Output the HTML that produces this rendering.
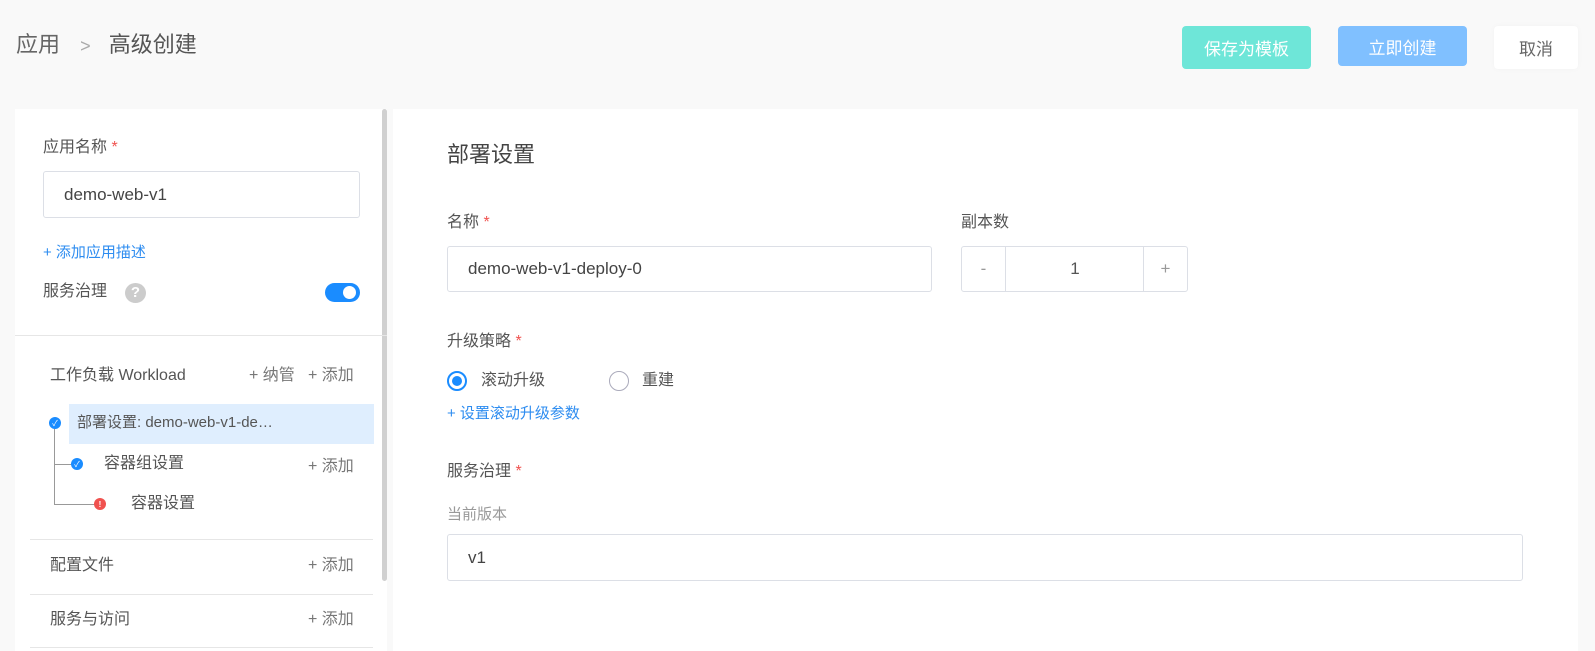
<!DOCTYPE html>
<html><head><meta charset="utf-8"><style>
*{margin:0;padding:0;box-sizing:border-box}
body{width:1595px;height:651px;background:#f9f9f9;font-family:"Liberation Sans","Noto Sans CJK SC",sans-serif;position:relative;overflow:hidden;color:#555}
.a{position:absolute;white-space:nowrap;line-height:1}
.btn{position:absolute;border-radius:4px;color:#fff;font-size:17px;display:flex;align-items:center;justify-content:center}
.inp{position:absolute;border:1px solid #dcdfe6;border-radius:3px;background:#fff;font-size:17px;color:#444;display:flex;align-items:center;padding-left:20px}
.star{color:#f0524f}
.blue{color:#2d8cf0}
.hr{position:absolute;height:1px;background:#e6e6e6}
.dot{position:absolute;width:12px;height:12px;border-radius:50%;background:#1a8cff;color:#fff;font-size:8px;display:flex;align-items:center;justify-content:center}
</style></head><body>
<div class="a" style="left:16px;top:34px;font-size:22px;color:#666">应用 <span style="color:#aaa;margin:0 12px 0 14px;font-size:18px">&gt;</span> <span style="color:#555">高级创建</span></div>
<div class="btn" style="left:1182px;top:26px;width:129px;height:43px;background:#6ee6d8">保存为模板</div>
<div class="btn" style="left:1338px;top:26px;width:129px;height:40px;background:#80c0ff">立即创建</div>
<div class="btn" style="left:1494px;top:26px;width:84px;height:43px;background:#fff;color:#666;box-shadow:0 0 6px rgba(0,0,0,.03)">取消</div>

<div style="position:absolute;left:15px;top:109px;width:372px;height:542px;background:#fff"></div>
<div style="position:absolute;left:382px;top:109px;width:5px;height:472px;background:#d0d0d0;border-radius:3px"></div>
<div style="position:absolute;left:393px;top:109px;width:1185px;height:542px;background:#fff"></div>

<div class="a" style="left:43px;top:140px;font-size:16px">应用名称 <span class="star">*</span></div>
<div class="inp" style="left:43px;top:171px;width:317px;height:47px">demo-web-v1</div>
<div class="a blue" style="left:43px;top:245px;font-size:15px">+ 添加应用描述</div>
<div class="a" style="left:43px;top:284px;font-size:16px">服务治理</div>
<div style="position:absolute;left:125px;top:283px;width:21px;height:20px;border-radius:50%;background:#ccc;color:#fff;font-size:15px;font-weight:bold;text-align:center;line-height:20px">?</div>
<div style="position:absolute;left:325px;top:283px;width:35px;height:19px;border-radius:10px;background:#1a8cff"><div style="position:absolute;right:4px;top:3px;width:13px;height:13px;border-radius:50%;background:#fff"></div></div>
<div class="hr" style="left:15px;top:335px;width:372px"></div>

<div class="a" style="left:50px;top:368px;font-size:16px">工作负载 Workload</div>
<div class="a" style="left:249px;top:368px;font-size:16px;color:#777">+ 纳管</div>
<div class="a" style="left:308px;top:368px;font-size:16px;color:#777">+ 添加</div>
<div style="position:absolute;left:69px;top:404px;width:305px;height:40px;background:#dfeefe"></div>
<div class="a" style="left:77px;top:415px;font-size:15px;color:#555">部署设置: demo-web-v1-de…</div>
<div style="position:absolute;left:54px;top:423px;width:1px;height:82px;background:#999"></div>
<div style="position:absolute;left:54px;top:464px;width:22px;height:1px;background:#999"></div>
<div style="position:absolute;left:54px;top:504px;width:44px;height:1px;background:#999"></div>
<div class="dot" style="left:49px;top:417px">✓</div>
<div class="dot" style="left:71px;top:458px">✓</div>
<div class="dot" style="left:94px;top:498px;background:#f0524f;font-weight:bold">!</div>
<div class="a" style="left:104px;top:456px;font-size:16px">容器组设置</div>
<div class="a" style="left:308px;top:459px;font-size:16px;color:#777">+ 添加</div>
<div class="a" style="left:131px;top:496px;font-size:16px">容器设置</div>
<div class="hr" style="left:30px;top:539px;width:343px"></div>
<div class="a" style="left:50px;top:558px;font-size:16px">配置文件</div>
<div class="a" style="left:308px;top:558px;font-size:16px;color:#777">+ 添加</div>
<div class="hr" style="left:30px;top:594px;width:343px"></div>
<div class="a" style="left:50px;top:612px;font-size:16px">服务与访问</div>
<div class="a" style="left:308px;top:612px;font-size:16px;color:#777">+ 添加</div>
<div class="hr" style="left:30px;top:647px;width:343px"></div>

<div class="a" style="left:447px;top:144px;font-size:22px;color:#444">部署设置</div>
<div class="a" style="left:447px;top:215px;font-size:16px">名称 <span class="star">*</span></div>
<div class="a" style="left:961px;top:215px;font-size:16px">副本数</div>
<div class="inp" style="left:447px;top:246px;width:485px;height:46px">demo-web-v1-deploy-0</div>
<div style="position:absolute;left:961px;top:246px;width:227px;height:46px;border:1px solid #dcdfe6;border-radius:3px;background:#fff;font-size:17px;color:#555">
<div style="position:absolute;left:0;top:0;width:44px;height:44px;line-height:44px;text-align:center;color:#999;border-right:1px solid #dcdfe6">-</div>
<div style="position:absolute;left:44px;top:0;width:138px;height:44px;line-height:44px;text-align:center">1</div>
<div style="position:absolute;right:0;top:0;width:44px;height:44px;line-height:44px;text-align:center;color:#999;border-left:1px solid #dcdfe6">+</div>
</div>
<div class="a" style="left:447px;top:334px;font-size:16px">升级策略 <span class="star">*</span></div>
<div style="position:absolute;left:447px;top:371px;width:20px;height:20px;border-radius:50%;border:2px solid #1a8cff"><div style="position:absolute;left:3px;top:3px;width:10px;height:10px;border-radius:50%;background:#1a8cff"></div></div>
<div class="a" style="left:481px;top:373px;font-size:16px">滚动升级</div>
<div style="position:absolute;left:609px;top:371px;width:20px;height:20px;border-radius:50%;border:1px solid #aab"></div>
<div class="a" style="left:642px;top:373px;font-size:16px">重建</div>
<div class="a blue" style="left:447px;top:406px;font-size:15px">+ 设置滚动升级参数</div>
<div class="a" style="left:447px;top:464px;font-size:16px">服务治理 <span class="star">*</span></div>
<div class="a" style="left:447px;top:507px;font-size:15px;color:#999">当前版本</div>
<div class="inp" style="left:447px;top:534px;width:1076px;height:47px">v1</div>
</body></html>
